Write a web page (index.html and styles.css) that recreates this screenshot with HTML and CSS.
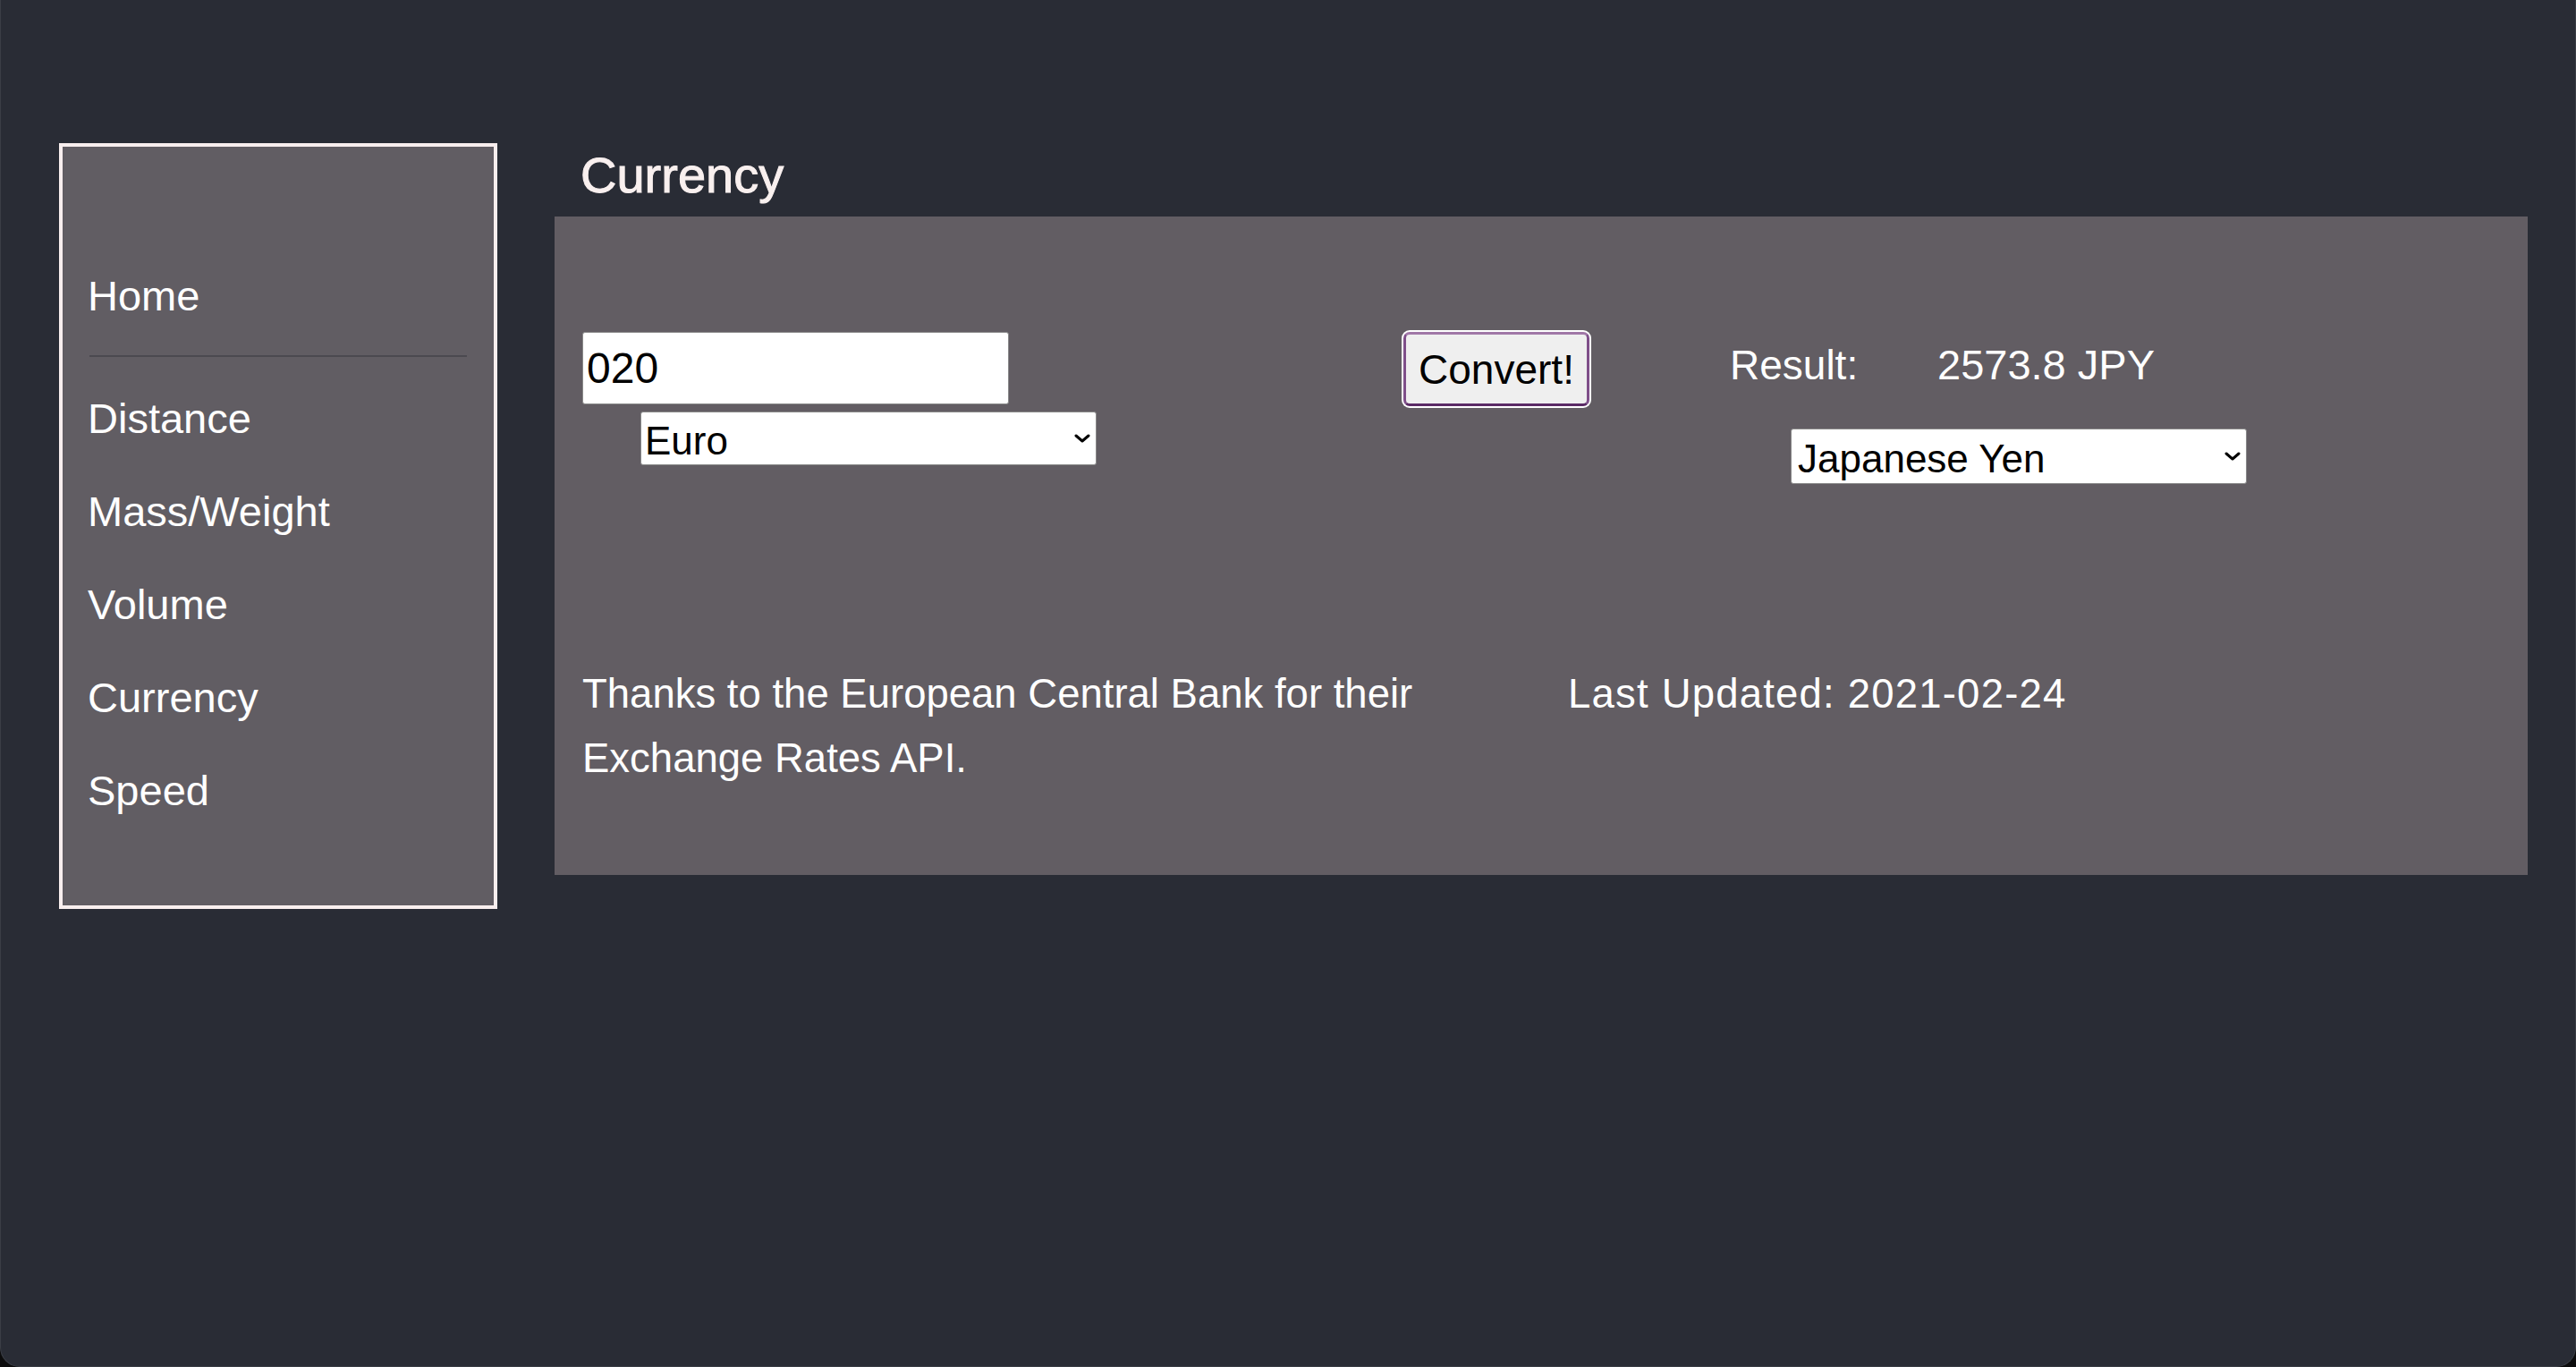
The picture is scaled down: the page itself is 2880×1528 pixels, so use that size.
FILE: index.html
```html
<!DOCTYPE html>
<html lang="en">
<head>
<meta charset="utf-8">
<title>Currency</title>
<link rel="stylesheet" href="styles.css">
</head>
<body>
<div class="window">
  <nav class="sidebar">
    <ul class="menu">
      <li>Home</li>
    </ul>
    <div class="sep"></div>
    <ul class="menu">
      <li>Distance</li>
      <li>Mass/Weight</li>
      <li>Volume</li>
      <li>Currency</li>
      <li>Speed</li>
    </ul>
  </nav>
  <main class="content">
    <h2 class="title">Currency</h2>
    <section class="panel">
      <div class="converter">
        <div class="from">
          <input class="amount" type="text" value="020">
          <div class="select-wrap from-select">
            <select><option>Euro</option></select>
            <svg class="chev" viewBox="0 0 18 10"><polyline points="2,2 9,8 16,2"/></svg>
          </div>
        </div>
        <button class="convert">Convert!</button>
        <div class="to">
          <div class="result"><span class="label">Result:</span><span class="value">2573.8 JPY</span></div>
          <div class="select-wrap to-select">
            <select><option>Japanese Yen</option></select>
            <svg class="chev" viewBox="0 0 18 10"><polyline points="2,2 9,8 16,2"/></svg>
          </div>
        </div>
      </div>
      <div class="info">
        <p class="credit">Thanks to the European Central Bank for their Exchange Rates API.</p>
        <p class="updated">Last Updated: 2021-02-24</p>
      </div>
    </section>
  </main>
</div>
</body>
</html>
```

FILE: styles.css
```css
html, body {
  margin: 0;
  padding: 0;
  background: #0c0c0d;
}

.window {
  box-sizing: border-box;
  width: 2880px;
  height: 1528px;
  background: #292c35;
  border: 1px solid #3b3e46;
  border-top: none;
  border-radius: 0 0 22px 22px;
  display: flex;
  align-items: flex-start;
  padding: 160px 53px 0 65px;
  font-family: "Liberation Sans", Arial, sans-serif;
  color: #ffffff;
}

.sidebar {
  flex: none;
  box-sizing: border-box;
  width: 490px;
  height: 856px;
  border: 4px solid #f8eeee;
  background: #615d63;
  padding: 115px 28px 76px;
}

.menu {
  list-style: none;
  margin: 0;
  padding: 0;
}

.menu li {
  font-size: 47px;
  line-height: 104px;
  white-space: nowrap;
}

.sep {
  height: 2px;
  background: #4b4950;
  margin: 14px 2px 17px;
}

.content {
  flex: 1;
  margin-left: 64px;
}

.title {
  margin: 0 0 10px;
  padding-left: 29px;
  font-size: 56px;
  line-height: 72px;
  font-weight: normal;
  color: #f9f0ef;
  -webkit-text-stroke: 1px #f9f0ef;
}

.panel {
  box-sizing: border-box;
  height: 736px;
  background: #625d63;
  padding: 127px 0 0 31px;
}

.converter {
  display: flex;
  align-items: flex-start;
}

.from {
  flex: none;
  width: 916px;
}

.amount {
  display: block;
  box-sizing: border-box;
  width: 477px;
  height: 81px;
  margin: 2px 0 0;
  border: 1px solid #8a8a8a;
  border-radius: 3px;
  padding: 0 4px;
  background: #ffffff;
  color: #000000;
  font: 48px "Liberation Sans", Arial, sans-serif;
  outline: none;
}

.select-wrap {
  position: relative;
  box-sizing: border-box;
  width: 510px;
}

.from-select {
  margin: 8px 0 0 65px;
  height: 60px;
}

.to-select {
  margin: 39px 0 0 68px;
  height: 62px;
}

.select-wrap select {
  -webkit-appearance: none;
  appearance: none;
  display: block;
  box-sizing: border-box;
  width: 100%;
  height: 100%;
  margin: 0;
  border: 1px solid #8a8a8a;
  border-radius: 3px;
  background: #ffffff;
  color: #000000;
  font: 44px "Liberation Sans", Arial, sans-serif;
  padding: 5px 40px 0 4px;
  outline: none;
}

.to-select select {
  padding-left: 7px;
}

.chev {
  position: absolute;
  right: 7px;
  top: 50%;
  width: 18px;
  height: 10px;
  margin-top: -5px;
  pointer-events: none;
}

.chev polyline {
  fill: none;
  stroke: #000000;
  stroke-width: 3;
  stroke-linecap: round;
  stroke-linejoin: round;
}

.convert {
  flex: none;
  box-sizing: border-box;
  width: 208px;
  height: 83px;
  margin: 2px;
  padding: 0;
  border: 3px solid;
  border-color: #a077a7 #7f4f8a #5a2a65 #7f4f8a;
  border-radius: 7px;
  box-shadow: 0 0 0 2px #ffffff;
  background: #efefef;
  color: #000000;
  font: 46px "Liberation Sans", Arial, sans-serif;
}

.to {
  margin-left: 155px;
}

.result {
  display: flex;
  font-size: 46px;
  line-height: 64px;
  padding-top: 7px;
  white-space: nowrap;
}

.label {
  width: 232px;
}

.value {
  font-size: 47px;
}

.info {
  display: flex;
  margin-top: 199px;
  font-size: 45.5px;
  line-height: 72px;
}

.credit {
  flex: none;
  width: 1102px;
  margin: 0;
}

.updated {
  margin: 0;
  letter-spacing: 1.2px;
  white-space: nowrap;
}
```
